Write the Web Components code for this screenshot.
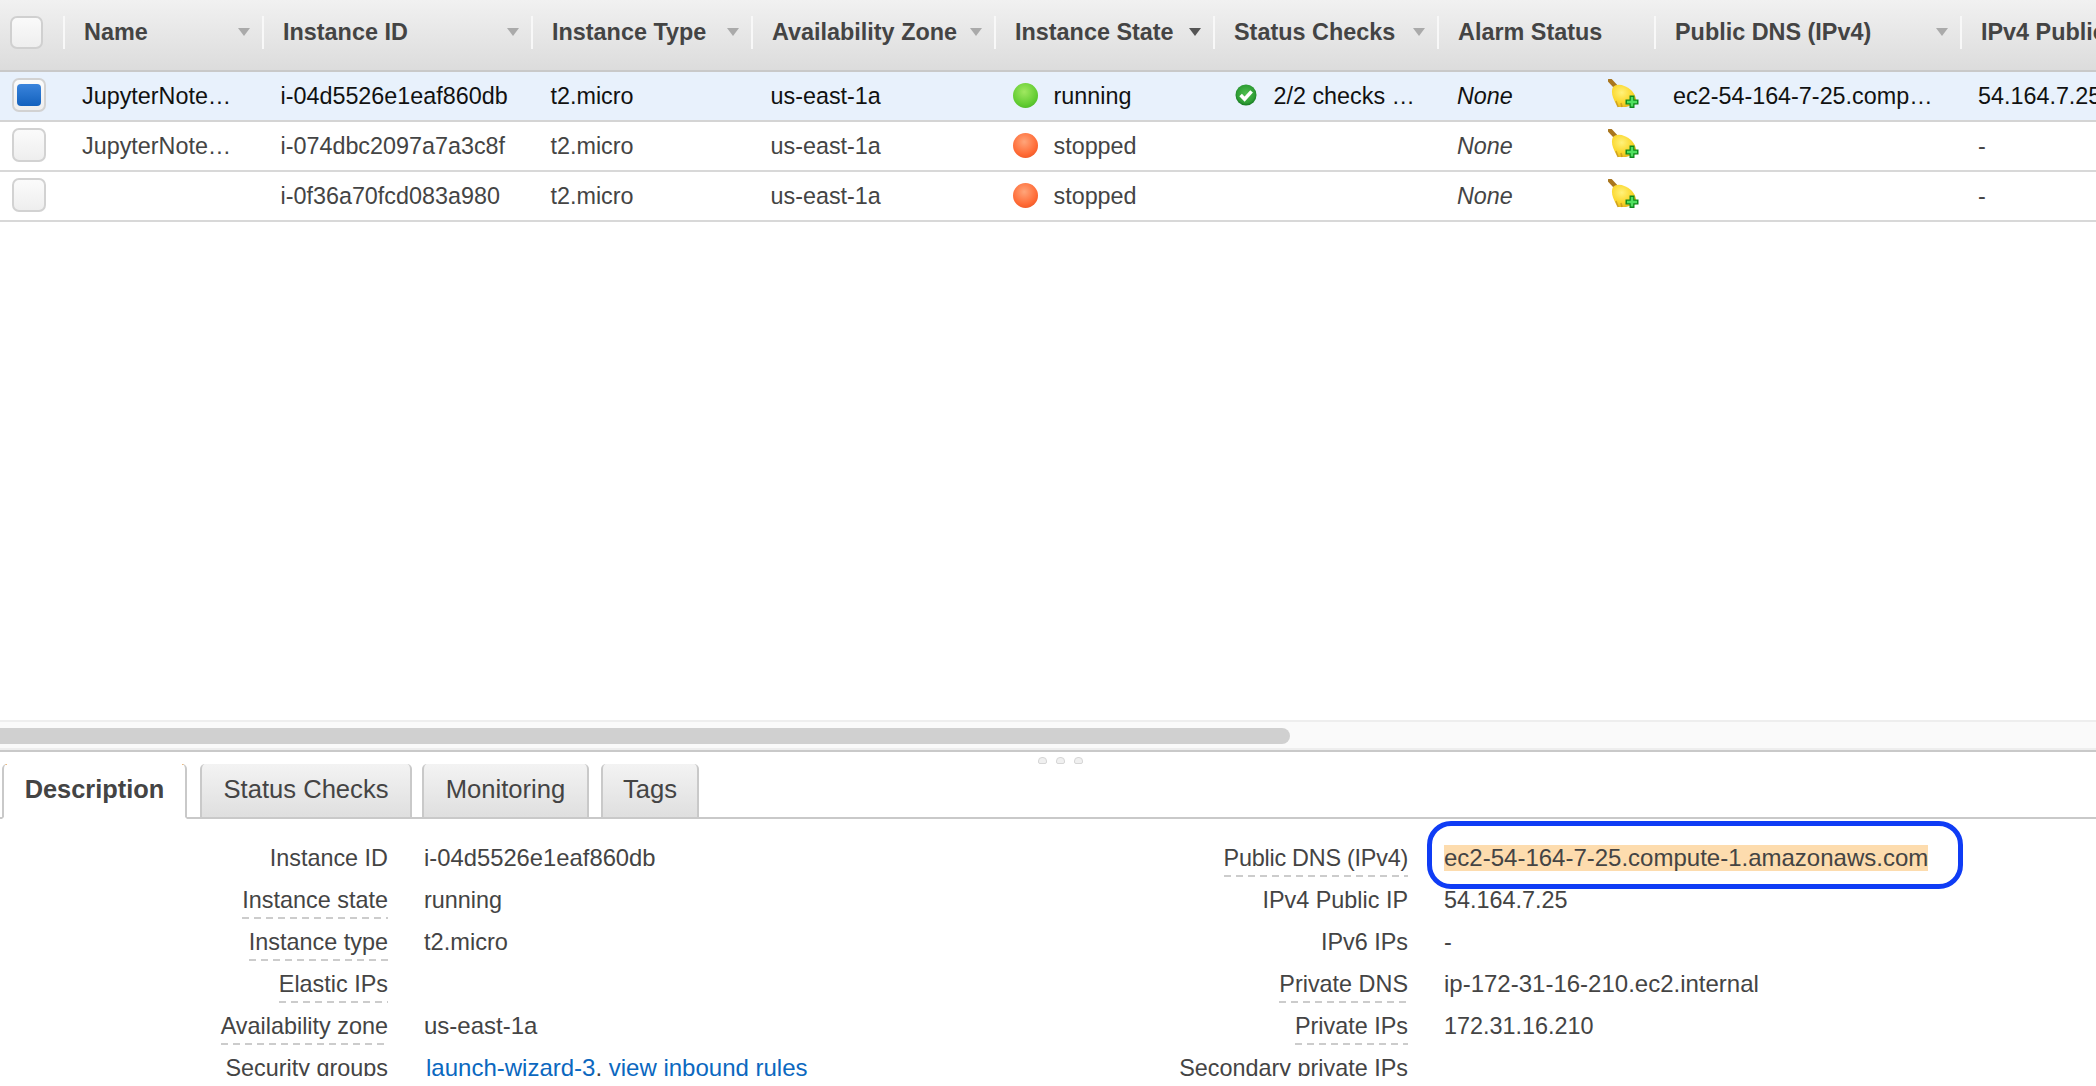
<!DOCTYPE html>
<html>
<head>
<meta charset="utf-8">
<title>Instances</title>
<style>
html,body{margin:0;padding:0;background:#fff;overflow:hidden;}
body{width:2096px;height:1086px;font-family:"Liberation Sans",Arial,sans-serif;}
</style>
</head>
<body>
<ec2-console>
  <grid-head>
    <head-cell w="199" label="Name"></head-cell>
    <head-cell w="269" label="Instance ID"></head-cell>
    <head-cell w="220" label="Instance Type"></head-cell>
    <head-cell w="243" label="Availability Zone"></head-cell>
    <head-cell w="219" label="Instance State" active></head-cell>
    <head-cell w="224" label="Status Checks"></head-cell>
    <head-cell w="217" label="Alarm Status" nosort></head-cell>
    <head-cell w="306" label="Public DNS (IPv4)"></head-cell>
    <head-cell w="300" label="IPv4 Public IP"></head-cell>
  </grid-head>
  <instance-row selected name="JupyterNote…" iid="i-04d5526e1eaf860db" state="running" checks="2/2 checks …" dns="ec2-54-164-7-25.comp…" ip="54.164.7.25"></instance-row>
  <instance-row name="JupyterNote…" iid="i-074dbc2097a7a3c8f" state="stopped" ip="-"></instance-row>
  <instance-row iid="i-0f36a70fcd083a980" state="stopped" ip="-"></instance-row>
  <h-scrollbar></h-scrollbar>
  <tab-strip>
    <tab-item active w="185" gap="13">Description</tab-item>
    <tab-item w="212" gap="10">Status Checks</tab-item>
    <tab-item w="167" gap="12">Monitoring</tab-item>
    <tab-item w="98" gap="0">Tags</tab-item>
  </tab-strip>
  <detail-panel>
    <detail-col slot="left">
      <detail-row label="Instance ID" fs="23.8">i-04d5526e1eaf860db</detail-row>
      <detail-row label="Instance state" dashed>running</detail-row>
      <detail-row label="Instance type" dashed fs="23.6">t2.micro</detail-row>
      <detail-row label="Elastic IPs" dashed></detail-row>
      <detail-row label="Availability zone" dashed fs="24">us-east-1a</detail-row>
      <detail-row label="Security groups" dashed fs="24"><sg-links></sg-links></detail-row>
    </detail-col>
    <detail-col slot="right">
      <detail-row label="Public DNS (IPv4)" ls="-0.24" dashed fs="24"><ring-mark>ec2-54-164-7-25.compute-1.amazonaws.com</ring-mark></detail-row>
      <detail-row label="IPv4 Public IP">54.164.7.25</detail-row>
      <detail-row label="IPv6 IPs">-</detail-row>
      <detail-row label="Private DNS" dashed fs="24">ip-172-31-16-210.ec2.internal</detail-row>
      <detail-row label="Private IPs" dashed>172.31.16.210</detail-row>
      <detail-row label="Secondary private IPs" dashed></detail-row>
    </detail-col>
  </detail-panel>
</ec2-console>

<script>
// small helper, every element gets an open shadow root with its own style
function shadow(el, html) {
  el.attachShadow({mode: 'open'}).innerHTML = html;
}

const broom = `<svg width="31" height="29" viewBox="0 0 31 29">
  <defs>
    <radialGradient id="b" cx="0.4" cy="0.35" r="0.75"><stop offset="0" stop-color="#fff27a"/><stop offset="0.6" stop-color="#fbd62a"/><stop offset="1" stop-color="#dcae1c"/></radialGradient>
  </defs>
  <path d="M2 1.5 L9 9" stroke="#a9761f" stroke-width="4.5" stroke-linecap="round"/>
  <path d="M5 8 C9 4 17 6 23 11 C27 15 29 20 28 25 L18 28 L10 28 C6 22 2 14 5 8Z" fill="url(#b)"/>
  <path d="M10 28 L8 22 M14 28 L13 24" stroke="#b98a20" stroke-width="1.5" opacity=".6"/>
  <path d="M21.5 16.5 h5 v4 h4 v5 h-4 v3.5 h-5 v-3.5 h-4 v-5 h4z" fill="#0f8a1e"/>
  <path d="M22.8 18 h2.4 v3.8 h3.8 v2.4 h-3.8 v3.4 h-2.4 v-3.4 h-3.8 v-2.4 h3.8z" fill="#4fe05f"/>
</svg>`;

const okIcon = `<svg width="22" height="22" viewBox="0 0 22 22">
  <defs><radialGradient id="g" cx="0.5" cy="0.45" r="0.6"><stop offset="0" stop-color="#4fc04f"/><stop offset="0.7" stop-color="#2f9e35"/><stop offset="1" stop-color="#0c6a18"/></radialGradient></defs>
  <circle cx="11" cy="11" r="10.5" fill="url(#g)"/>
  <path d="M5.6 11 L9.6 15.2 L16.6 7.4" fill="none" stroke="#fff" stroke-width="3.6"/>
</svg>`;

class Ec2Console extends HTMLElement {
  constructor() {
    super();
    shadow(this, `<style>
      :host{display:flex;flex-direction:column;width:2096px;height:1076px;overflow:hidden;background:#fff;}
    </style><slot></slot>`);
  }
}

class GridHead extends HTMLElement {
  constructor() {
    super();
    shadow(this, `<style>
      :host{display:flex;flex:none;height:70px;width:2096px;overflow:hidden;border-bottom:2px solid #c9c9c9;
        background:linear-gradient(#f1f1f1,#dcdcdc);}
      .box{flex:none;width:33px;height:33px;margin:16px 20px 0 10px;box-sizing:border-box;border:2px solid #d0d0d0;border-radius:7px;
        background:linear-gradient(#fafafa,#eeeeee);}
    </style><div class="box"></div><slot></slot>`);
  }
}

class HeadCell extends HTMLElement {
  constructor() {
    super();
    const arrow = this.hasAttribute('nosort') ? '' :
      `<i class="arrow ${this.hasAttribute('active') ? 'on' : ''}"></i>`;
    shadow(this, `<style>
      :host{display:block;flex:none;box-sizing:border-box;position:relative;width:${this.getAttribute('w')}px;height:33px;margin-top:16px;
        border-left:2px solid #f8f8f8;padding-left:19px;font:bold 23.4px/33px "Liberation Sans",Arial,sans-serif;color:#444;white-space:nowrap;}
      .arrow{position:absolute;right:12px;top:12px;width:0;height:0;border:6.5px solid transparent;border-top:8px solid #aaa;border-bottom:0;}
      .arrow.on{border-top-color:#555;}
    </style>${this.getAttribute('label')}${arrow}`);
  }
}

class InstanceRow extends HTMLElement {
  constructor() {
    super();
    const a = n => this.getAttribute(n) || '';
    const sel = this.hasAttribute('selected');
    const run = a('state') === 'running';
    shadow(this, `<style>
      :host{display:flex;flex:none;align-items:center;width:2096px;height:48px;overflow:hidden;white-space:nowrap;
        border-bottom:2px solid #d8d8d8;font:23.35px/48px "Liberation Sans",Arial,sans-serif;
        color:${sel ? '#111' : '#444'};background:${sel ? '#e8f1fc' : '#fff'};}
      :host([selected]){border-bottom-color:#d4d4d4;}
      div{flex:none;}
      .check{width:34px;height:34px;margin:-2px -1px 0 12px;box-sizing:border-box;border:2px solid #d2d2d2;border-radius:7px;
        background:linear-gradient(#fbfbfb,#eeeeee);padding:4px 3px;}
      .check b{display:block;height:100%;border-radius:4px;background:linear-gradient(#3a84dc,#1361bd);}
      .dot{width:25px;height:25px;border-radius:50%;margin-top:-1px;
        background:radial-gradient(circle at 45% 35%,${run ? '#a0e860,#62cc32 60%,#3da820' : '#ffa57a,#ff6a35 60%,#e04a1e'});}
      .ok{height:22px;width:22px;line-height:0;margin-top:-2px;}
    </style>
    <div class="check">${sel ? '<b></b>' : ''}</div>
    <div style="width:198.5px;margin-left:37px">${a('name')}</div>
    <div style="width:270px">${a('iid')}</div>
    <div style="width:220px">${a('type') || 't2.micro'}</div>
    <div style="width:242px">${a('az') || 'us-east-1a'}</div>
    <div class="dot"></div>
    <div style="width:181px;margin-left:16px">${a('state')}</div>
    <div class="ok">${a('checks') ? okIcon : ''}</div>
    <div style="width:183.5px;margin-left:17px">${a('checks')}</div>
    <div style="width:151px;font-style:italic">None</div>
    <div style="width:65px;height:29px;line-height:0;margin-top:-5px">${broom}</div>
    <div style="width:305px">${a('dns')}</div>
    <div>${a('ip')}</div>`);
  }
}

class HScrollbar extends HTMLElement {
  constructor() {
    super();
    shadow(this, `<style>
      :host{display:block;flex:none;box-sizing:border-box;margin-top:498px;height:32px;padding:6px 0 4px;
        background:#fafafa;border-top:2px solid #eeeeee;border-bottom:2px solid #c9c9c9;box-shadow:inset 0 -2px 0 #eee;}
      .thumb{width:1290px;height:16px;background:#d0d0d0;border-radius:0 8px 8px 0;}
      .grip{position:absolute;left:1038px;top:757px;display:flex;gap:9px;}
      .grip i{width:9px;height:7px;box-sizing:border-box;border:1px solid #d6d6d6;border-radius:4px 4px 2px 2px;background:#f0f0f0;}
    </style><div class="thumb"></div><div class="grip"><i></i><i></i><i></i></div>`);
  }
}

class TabStrip extends HTMLElement {
  constructor() {
    super();
    shadow(this, `<style>
      :host{display:flex;flex:none;box-sizing:border-box;height:55px;margin-top:12px;padding-left:2px;
        background:linear-gradient(transparent 53px,#c9c9c9 53px);}
    </style><slot></slot>`);
  }
}

class TabItem extends HTMLElement {
  constructor() {
    super();
    shadow(this, `<style>
      :host{display:block;flex:none;box-sizing:border-box;width:${this.getAttribute('w')}px;margin-right:${this.getAttribute('gap')}px;
        height:55px;text-align:center;font:25.6px/51px "Liberation Sans",Arial,sans-serif;color:#444;
        background:linear-gradient(#f3f3f3,#dfdfdf);border:2px solid #c9c9c9;border-top:0;border-radius:5px 5px 0 0;}
      :host([active]){font-size:25.4px;font-weight:bold;border-bottom-color:#fff;
        background:linear-gradient(#f5b56b,#f5b56b) left top/3px 1px no-repeat,linear-gradient(#f5b56b,#f5b56b) right top/3px 1px no-repeat,#fff;}
    </style><slot></slot>`);
  }
}

class DetailPanel extends HTMLElement {
  constructor() {
    super();
    shadow(this, `<style>
      :host{display:flex;flex:none;padding-top:18px;}
    </style><slot name="left"></slot><slot name="right"></slot>`);
  }
}

class DetailCol extends HTMLElement {
  constructor() {
    super();
    shadow(this, `<style>
      :host{display:block;flex:none;width:1020px;}
      :host([slot=right]){width:1076px;}
    </style><slot></slot>`);
  }
}

class DetailRow extends HTMLElement {
  constructor() {
    super();
    const dashed = this.hasAttribute('dashed');
    const fs = this.getAttribute('fs') || '23.4';
    const ls = this.getAttribute('ls') || '0';
    shadow(this, `<style>
      :host{display:flex;height:42px;font:23.4px/42px "Liberation Sans",Arial,sans-serif;color:#444;white-space:nowrap;}
      .l{flex:none;width:388px;display:flex;justify-content:flex-end;letter-spacing:${ls}px;}
      .l span{display:block;height:40px;${dashed ? 'background:repeating-linear-gradient(90deg,#cccccc 0 7px,transparent 7px 12px) left bottom/100% 2px no-repeat;' : ''}}
      .v{margin-left:36px;color:#444;font-size:${fs}px;}
    </style><div class="l"><span>${this.getAttribute('label')}</span></div><div class="v"><slot></slot></div>`);
  }
}

class RingMark extends HTMLElement {
  constructor() {
    super();
    shadow(this, `<style>
      :host{display:inline-block;position:relative;}
      .hl{background:#fddcae;display:inline-block;line-height:26px;}
      .ring{position:absolute;left:-17px;top:-16px;width:536px;height:68px;box-sizing:border-box;border:5px solid #0f3cf5;border-radius:24px;}
    </style><span class="hl"><slot></slot></span><div class="ring"></div>`);
  }
}

class SgLinks extends HTMLElement {
  constructor() {
    super();
    shadow(this, `<style>
      :host{display:inline;color:#444;}
      a{color:#0b68bf;text-decoration:none;}
    </style><a href="#" style="margin-left:2px">launch-wizard-3</a>. <a href="#">view inbound rules</a>`);
  }
}

customElements.define('ec2-console', Ec2Console);
customElements.define('grid-head', GridHead);
customElements.define('head-cell', HeadCell);
customElements.define('instance-row', InstanceRow);
customElements.define('h-scrollbar', HScrollbar);
customElements.define('tab-strip', TabStrip);
customElements.define('tab-item', TabItem);
customElements.define('detail-panel', DetailPanel);
customElements.define('detail-col', DetailCol);
customElements.define('detail-row', DetailRow);
customElements.define('ring-mark', RingMark);
customElements.define('sg-links', SgLinks);
</script>
</body>
</html>
